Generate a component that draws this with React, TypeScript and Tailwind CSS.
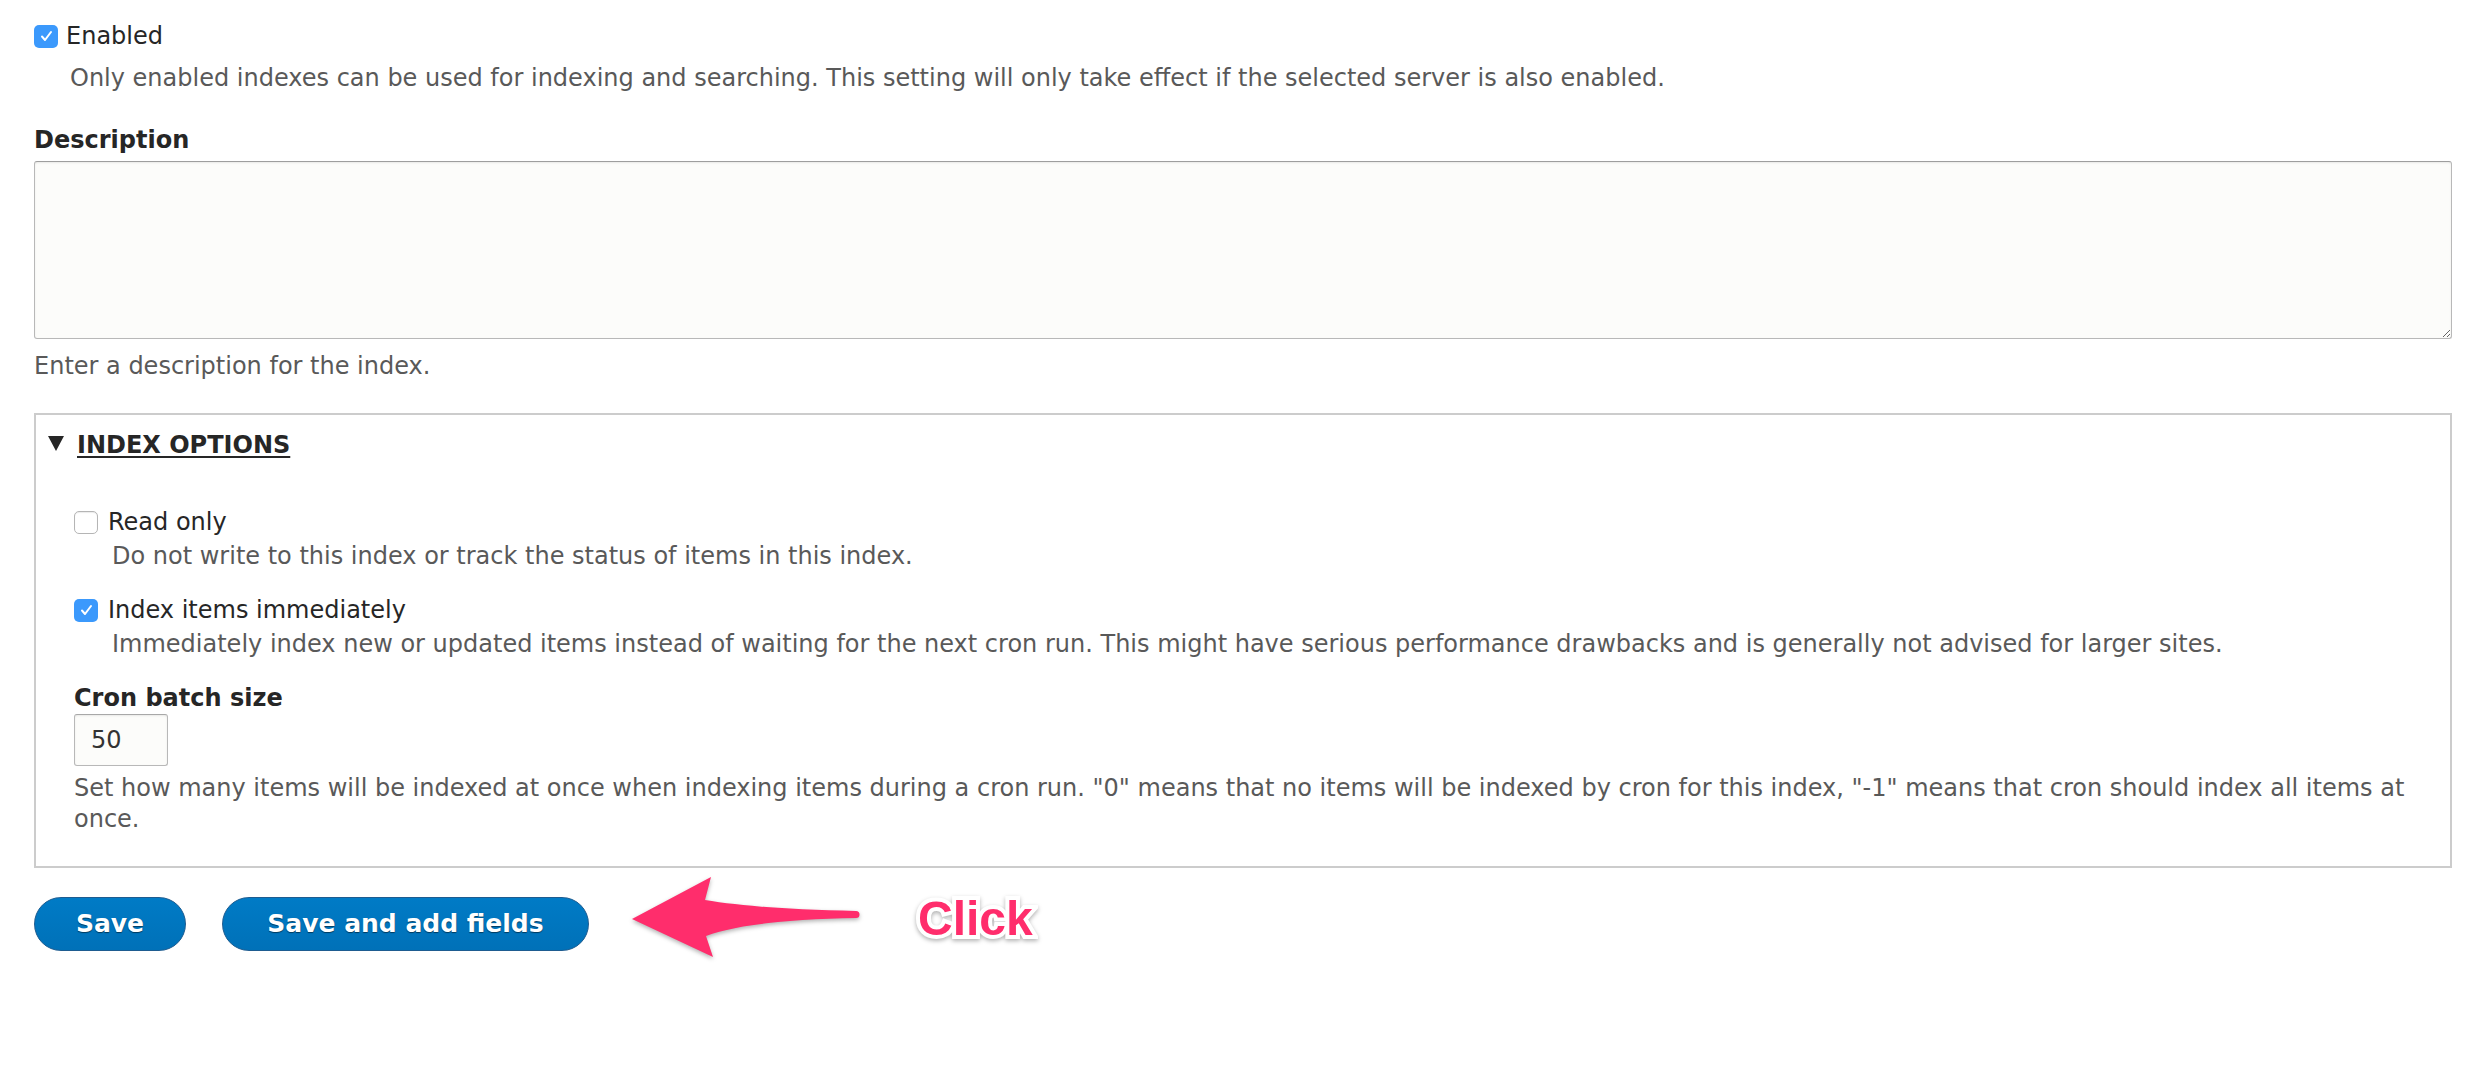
import React from "react";

function Checkbox({ checked }: { checked: boolean }) {
  if (checked) {
    return (
      <span className="flex h-[23px] w-[24px] shrink-0 items-center justify-center rounded-[5px] bg-[#3b99fc]">
        <svg width="13" height="12" viewBox="0 0 13 12">
          <path d="M2 6.5 L5 10 L11 2" fill="none" stroke="white" strokeWidth="2" strokeLinecap="round" strokeLinejoin="round" />
        </svg>
      </span>
    );
  }
  return (
    <span className="block h-[23px] w-[24px] shrink-0 rounded-[5px] border border-[#b5b5b5] bg-white shadow-[inset_0_1px_1px_rgba(0,0,0,0.08)]" />
  );
}

export default function App() {
  return (
    <div className="min-h-screen bg-white pl-[34px] pr-[22px] pt-[20px] font-['DejaVu_Sans',sans-serif] text-[24px] leading-[32px] text-[#262626]">
      {/* enabled */}
      <div className="flex h-[32px] items-center">
        <Checkbox checked />
        <span className="ml-[8px]">Enabled</span>
      </div>
      <p className="mt-[10px] pl-[36px] text-[#595959]">
        Only enabled indexes can be used for indexing and searching. This setting will only take effect if the selected server is also enabled.
      </p>

      {/* description */}
      <div className="mt-[30px] font-bold">Description</div>
      <textarea className="mt-[5px] block h-[178px] w-full resize-y rounded-[3px] border border-[#b8b8b8] border-t-[#9e9e9e] bg-[#fcfcfa] shadow-[inset_0_1px_2px_rgba(0,0,0,0.08)] outline-none" />
      <p className="mt-[11px] text-[#595959]">Enter a description for the index.</p>

      {/* index options */}
      <div className="mt-[31px] border-2 border-[#cccccc] pl-[12px] pr-[36px] pb-[31px] pt-[14px]">
        <div className="flex h-[32px] items-center">
          <svg width="16" height="15" viewBox="0 0 16 15" className="mb-[3px] shrink-0">
            <polygon points="0,0 16,0 8,15" fill="#262626" />
          </svg>
          <span className="ml-[13px] font-bold underline decoration-2 underline-offset-[3px]">INDEX OPTIONS</span>
        </div>

        <div className="pl-[26px]">
          <div className="mt-[45px] flex h-[32px] items-center">
            <Checkbox checked={false} />
            <span className="ml-[10px]">Read only</span>
          </div>
          <p className="mt-[2px] pl-[38px] text-[#595959]">
            Do not write to this index or track the status of items in this index.
          </p>

          <div className="mt-[22px] flex h-[32px] items-center">
            <Checkbox checked />
            <span className="ml-[10px]">Index items immediately</span>
          </div>
          <p className="mt-[2px] pl-[38px] text-[#595959]">
            Immediately index new or updated items instead of waiting for the next cron run. This might have serious performance drawbacks and is generally not advised for larger sites.
          </p>

          <div className="mt-[22px] font-bold">Cron batch size</div>
          <input
            defaultValue="50"
            className="block h-[52px] w-[94px] rounded-[3px] border border-[#b8b8b8] border-t-[#a8a8a8] bg-[#fcfcfa] pl-[16px] text-[#333] shadow-[inset_0_1px_2px_rgba(0,0,0,0.08)] outline-none"
          />
          <p className="mt-[7px] leading-[31px] text-[#595959]">
            Set how many items will be indexed at once when indexing items during a cron run. "0" means that no items will be indexed by cron for this index, "-1" means that cron should index all items at once.
          </p>
        </div>
      </div>

      {/* actions */}
      <div className="mt-[27px] flex items-center">
        <button className="h-[54px] w-[152px] rounded-full border border-[#1e5c90] bg-gradient-to-b from-[#007bc6] to-[#0071b8] text-[25px] font-bold text-white [text-shadow:0_1px_1px_rgba(0,0,0,0.5)]">
          Save
        </button>
        <button className="ml-[36px] h-[54px] w-[367px] rounded-full border border-[#1e5c90] bg-gradient-to-b from-[#007bc6] to-[#0071b8] text-[25px] font-bold text-white [text-shadow:0_1px_1px_rgba(0,0,0,0.5)]">
          Save and add fields
        </button>

        <svg width="235" height="90" viewBox="0 0 235 90" className="-mt-[24px] -mb-[12px] ml-[41px] shrink-0 drop-shadow-[0_2px_2px_rgba(0,0,0,0.3)]">
          <path
            d="M2 46 L81 4 L75 27 C 110 33, 165 37, 226 38 A 3.5 3.5 0 0 1 226 45 C 165 46, 108 51, 76 63 L83 84 Z"
            fill="#ff2d6c"
          />
        </svg>

        <span className="mb-[10px] ml-[53px] font-['Liberation_Sans',Arial,sans-serif] text-[48px] font-bold leading-[48px] text-[#ff2d6c] [-webkit-text-stroke:8px_white] [paint-order:stroke_fill] drop-shadow-[0_2px_2px_rgba(0,0,0,0.3)]">
          Click
        </span>
      </div>
    </div>
  );
}
